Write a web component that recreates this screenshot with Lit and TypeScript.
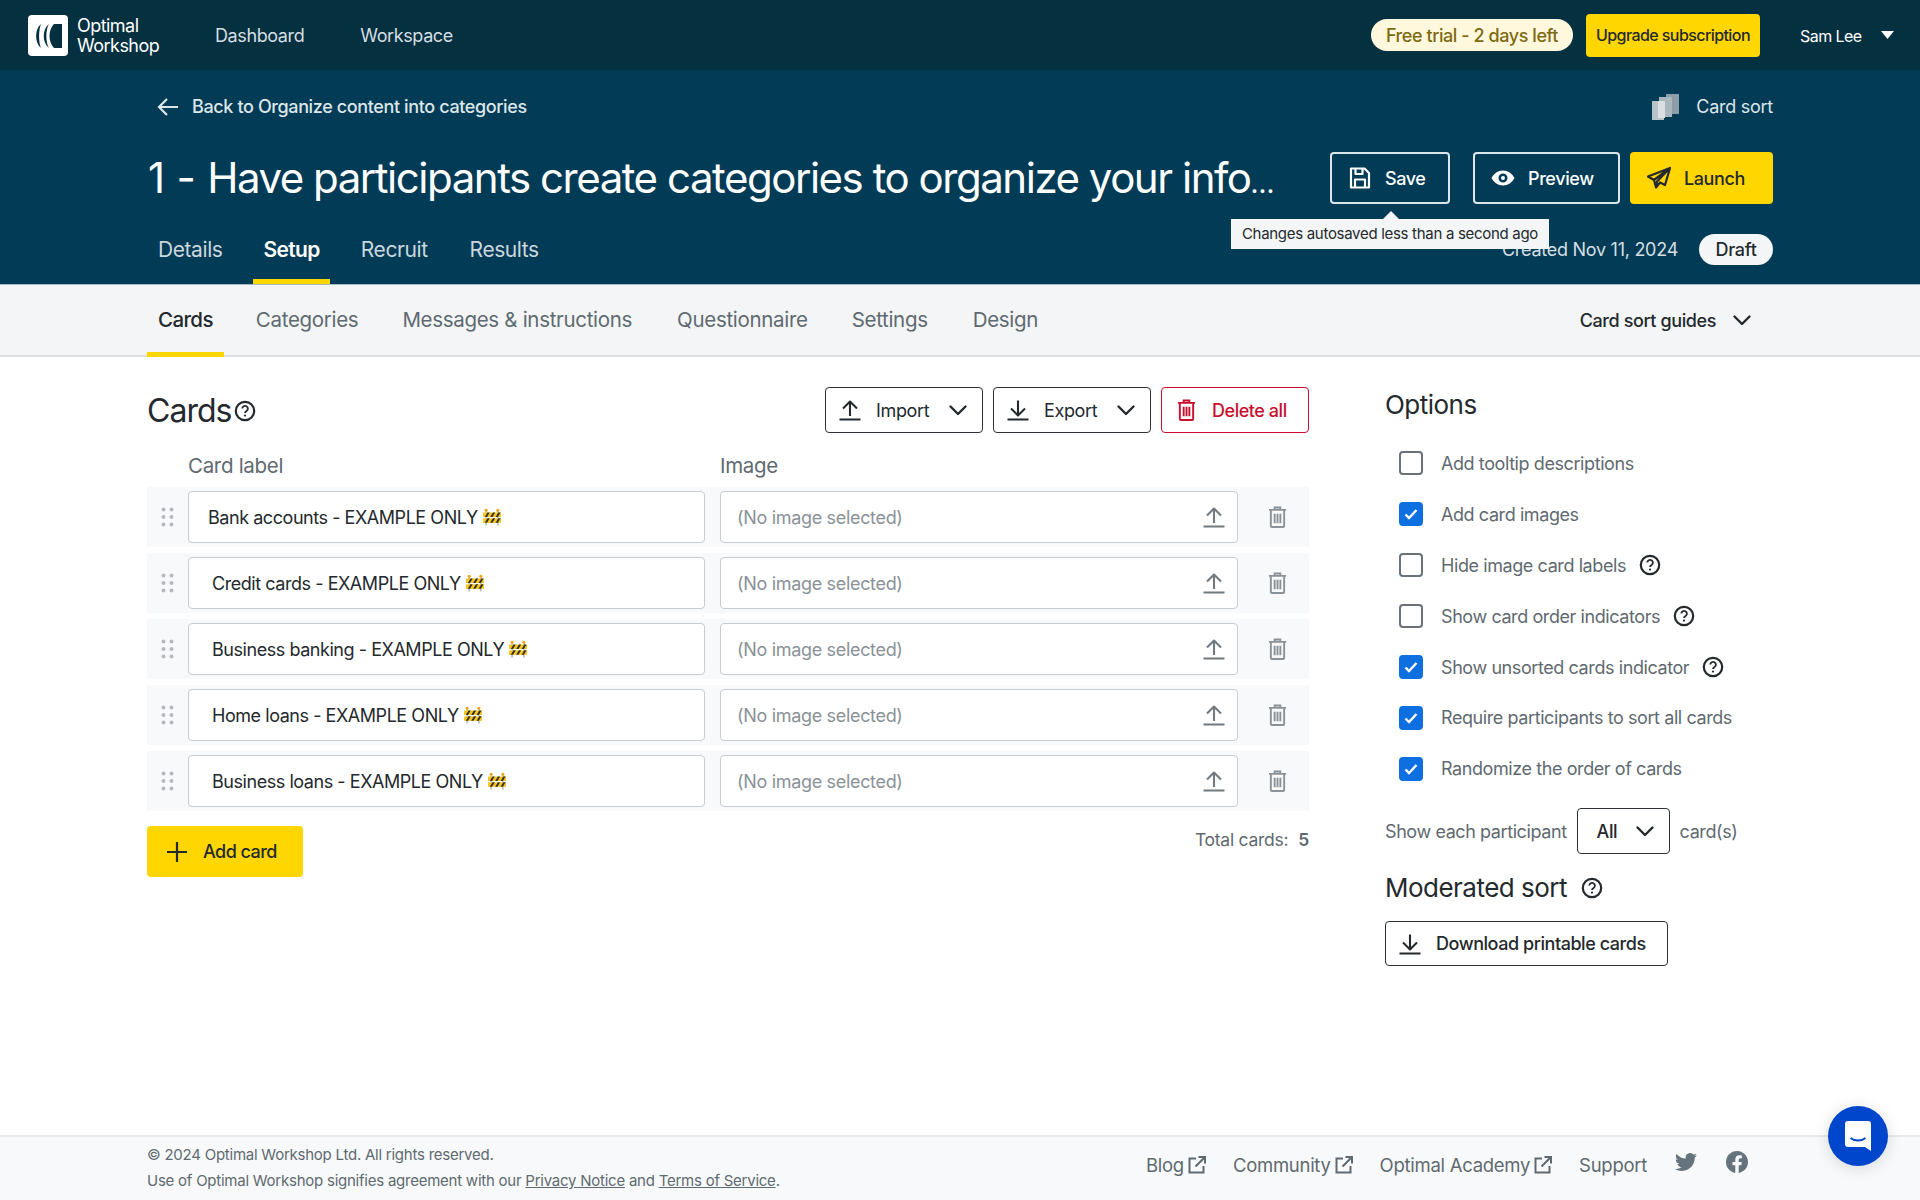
import { LitElement, html, css, svg } from "lit";
import { customElement } from "lit/decorators.js";

const chevron = svg`<path d="M2.500 6.500l7.500 7.500 7.500-7.500" fill="none" stroke="currentColor" stroke-width="2.400" stroke-linecap="round" stroke-linejoin="round"/>`;
const chev = html`<svg class="chev" viewBox="0 0 20 20">${chevron}</svg>`;
const upload = html`<svg class="ic" viewBox="0 0 24 24"><path d="M12 18V3.500M5 10.500L12 3.500l7 7M1.500 21.500h21" fill="none" stroke="currentColor" stroke-width="2.100" stroke-linejoin="round"/></svg>`;
const download = html`<svg class="ic" viewBox="0 0 24 24"><path d="M12 2.500v15M5 10.500l7 7 7-7M1.500 21.500h21" fill="none" stroke="currentColor" stroke-width="2.100" stroke-linejoin="round"/></svg>`;
const trash = html`<svg class="trash" viewBox="0 0 20 24"><path d="M1 4.500h18M7 4.500V2h6v2.500M3 4.500h14v17a1 1 0 0 1-1 1H4a1 1 0 0 1-1-1zM7 8.500v10M10 8.500v10M13 8.500v10" fill="none" stroke="currentColor" stroke-width="2"/></svg>`;
const help = html`<svg class="help" viewBox="0 0 22 22"><circle cx="11" cy="11" r="9.200" fill="none" stroke="currentColor" stroke-width="2.200"/><path d="M8.300 8.600a2.800 2.800 0 1 1 4.300 2.400c-1 .6-1.600 1-1.600 2" fill="none" stroke="currentColor" stroke-width="1.800"/><circle cx="11" cy="15.600" r="1.100" fill="currentColor"/></svg>`;
const ext = html`<svg class="ext" viewBox="0 0 20 20"><path d="M9 3.500H2.500v14h14V11M8.500 11.500L17.500 2.500M11.500 2h6.500v6.500" fill="none" stroke="currentColor" stroke-width="2"/></svg>`;
const barrier = html`<svg class="barrier" viewBox="0 0 20 20"><rect x="2.500" y="1.500" width="2" height="18" fill="#bcc3c9"/><rect x="15.500" y="1.500" width="2" height="18" fill="#bcc3c9"/><circle cx="3.500" cy="2.500" r="1.700" fill="#f4a51c"/><circle cx="16.500" cy="2.500" r="1.700" fill="#f4a51c"/><rect x="0" y="5" width="20" height="5" fill="#f7c51e"/><rect x="0" y="11.500" width="20" height="5" fill="#f7c51e"/><path d="M2 10l3-5h2.500l-3 5zM8 10l3-5h2.500l-3 5zM14 10l3-5h2.500l-3 5zM2 16.500l3-5h2.500l-3 5zM8 16.500l3-5h2.500l-3 5zM14 16.500l3-5h2.500l-3 5z" fill="#33302a"/></svg>`;

const rows = [
  ["Bank accounts - EXAMPLE ONLY", true],
  ["Credit cards - EXAMPLE ONLY", false],
  ["Business banking - EXAMPLE ONLY", false],
  ["Home loans - EXAMPLE ONLY", false],
  ["Business loans - EXAMPLE ONLY", false],
] as const;

const options: [string, boolean, boolean][] = [
  ["Add tooltip descriptions", false, false],
  ["Add card images", true, false],
  ["Hide image card labels", false, true],
  ["Show card order indicators", false, true],
  ["Show unsorted cards indicator", true, true],
  ["Require participants to sort all cards", true, false],
  ["Randomize the order of cards", true, false],
];

@customElement("app-root")
export class AppRoot extends LitElement {
  static styles = css`
    :host { display: flex; flex-direction: column; min-height: 1200px; position: relative; font-family: Inter, "Liberation Sans", sans-serif; color: #24292d; letter-spacing: -0.025em; background: #fff; overflow: hidden; }
    * { box-sizing: border-box; }
    a { color: inherit; }
    .ic { width: 24px; height: 24px; flex: none; }
    .chev { width: 20px; height: 20px; flex: none; }
    .trash { width: 19px; height: 24px; flex: none; }
    .help { width: 22px; height: 22px; flex: none; color: #24292d; }
    .ext { width: 20px; height: 20px; flex: none; margin-left: 3px; }
    .barrier { width: 18px; height: 18px; flex: none; margin-left: 5px; }

    .topnav { height: 70px; background: #04303f; display: flex; align-items: center; padding: 0 26px 0 28px; color: #fff; }
    .logo { width: 40px; height: 41px; flex: none; }
    .brand { margin-left: 9px; font-size: 18px; line-height: 20px; width: 100px; margin-right: 38px; letter-spacing: -0.03em; font-weight: 400; padding-top: 2px; }
    .nav { font-size: 18px; color: #d5dee3; margin-right: 56px; letter-spacing: -0.022em; }
    .spacer { flex: 1; }
    .trial { height: 32px; border-radius: 16px; background: #fff8dd; color: #7d6a10; font-size: 18px; font-weight: 500; display: flex; align-items: center; padding: 0 15px; margin-right: 13px; white-space: nowrap; letter-spacing: -0.024em; }
    .upgrade { height: 43px; width: 174px; background: #ffd600; border-radius: 4px; color: #24292d; font-size: 16px; font-weight: 500; display: flex; align-items: center; justify-content: center; margin-right: 40px; white-space: nowrap; letter-spacing: -0.036em; }
    .user { font-size: 16px; color: #fff; width: 81px; letter-spacing: -0.035em; padding-top: 2px; }
    .caret { width: 13px; height: 8px; flex: none; }

    .head { height: 215px; background: #023b56; color: #fff; padding: 0 147px; display: flex; flex-direction: column; border-bottom: 1px solid #a9b9c2; }
    .backrow { height: 75px; padding-bottom: 2px; display: flex; align-items: center; }
    .back { display: flex; align-items: center; font-size: 18px; color: #dde6ea; font-weight: 500; padding-left: 10px; gap: 13px; letter-spacing: -0.021em; }
    .back svg { width: 22px; height: 20px; }
    .type { margin-left: auto; display: flex; align-items: center; gap: 17px; font-size: 18px; color: #dde6ea; letter-spacing: -0.015em; }
    .type svg { width: 27px; height: 26px; }
    .titlerow { display: flex; align-items: center; height: 66px; }
    h1 { margin: 0; font-size: 42px; line-height: 50px; font-weight: 400; width: 1183px; white-space: nowrap; letter-spacing: -0.035em; padding-left: 1px; color: #fff; }
    .pre { word-spacing: 2.500px; }
    .ell { font-size: 0.66em; line-height: 0; }
    .hbtn { height: 52px; border-radius: 4px; border: 2px solid #dde6ea; font-size: 18px; font-weight: 500; display: flex; align-items: center; gap: 13px; color: #fff; padding-left: 16px; }
    .hbtn svg { width: 24px; height: 24px; }
    .save { width: 120px; margin-right: 23px; }
    .preview { width: 147px; margin-right: 10px; }
    .launch { width: 143px; background: #ffd600; border-color: #ffd600; color: #24292d; padding-left: 15px; }
    .tabrow { display: flex; align-items: stretch; flex: 1; margin-top: 9px; position: relative; padding-left: 1px; }
    .tab { font-size: 21px; color: #cbd7dd; padding: 0 10px; display: flex; align-items: center; border-bottom: 5px solid transparent; margin-right: 21px; letter-spacing: -0.02em; }
    .tab.on { color: #fff; font-weight: 600; border-color: #ffd600; margin-right: 21px; letter-spacing: -0.03em; }
    .tab.wide { margin-right: 22px; }
    .created { margin-left: auto; display: flex; align-items: center; font-size: 18px; color: #d5dfe5; gap: 21px; padding-bottom: 6px; letter-spacing: -0.015em; }
    .draft { width: 74px; height: 31px; border-radius: 16px; background: #f3f5f7; color: #24292d; font-weight: 500; display: flex; align-items: center; justify-content: center; }
    .tooltip { position: absolute; left: 1084px; top: -1px; width: 318px; height: 30px; padding-bottom: 1px; background: #f3f5f7; color: #24292d; font-size: 15px; display: flex; align-items: center; justify-content: center; white-space: nowrap; letter-spacing: -0.02em; }
    .tooltip::before { content: ""; position: absolute; left: 152px; top: -8px; border: 8px solid transparent; border-top: 0; border-bottom-color: #f3f5f7; }

    .subtabs { height: 72px; background: #f3f5f7; border-bottom: 2px solid #dcdfe2; display: flex; padding: 0 147px; align-items: stretch; color: #5f6a70; }
    .st { font-size: 20.500px; display: flex; align-items: center; padding: 2px 11px 0; margin-bottom: -2px; border-bottom: 5px solid transparent; letter-spacing: -0.015em; }
    .st.on { color: #24292d; font-weight: 500; border-color: #ffd600; letter-spacing: -0.03em; }
    .st.m21 { margin-left: 21px; }
    .st.m22 { margin-left: 22px; }
    .st.m23 { margin-left: 23px; }
    .guides { margin-left: auto; display: flex; align-items: center; gap: 16px; font-size: 18px; font-weight: 500; color: #24292d; padding-right: 21px; }

    main { flex: 1; display: flex; padding: 0 147px; }
    .left { width: 1162px; }
    .cardhead { display: flex; align-items: center; height: 46px; margin-top: 30px; }
    h2 { margin: 0; font-size: 32px; font-weight: 400; letter-spacing: -0.03em; }
    .cardhead .help { margin-left: 2px; margin-top: 1px; }
    .acts { margin-left: auto; display: flex; gap: 10px; }
    .btn { height: 46px; border: 1.500px solid #2d3236; border-radius: 4px; display: flex; align-items: center; font-size: 18px; color: #24292d; background: #fff; letter-spacing: -0.02em; }
    .btn.dd { width: 158px; padding: 0 14px 0 12px; }
    .btn.dd span { margin-left: 14px; margin-right: auto; }
    .btn.del { width: 148px; padding: 0 0 0 15px; color: #c8102e; border-color: #c8102e; font-weight: 500; gap: 16px; letter-spacing: -0.025em; }
    .cols { display: flex; padding-left: 41px; font-size: 20.500px; color: #5f6a70; margin-top: 11px; height: 43px; align-items: center; letter-spacing: -0.015em; }
    .cols div:first-child { width: 532px; }
    .list { display: flex; flex-direction: column; gap: 6px; }
    .row { height: 60px; background: #f8f9fa; display: flex; align-items: center; }
    .drag { width: 41px; display: flex; justify-content: center; }
    .drag svg { width: 13px; height: 20px; }
    .field { height: 52px; width: 517px; background: #fff; border: 1.500px solid #c8cdd1; border-radius: 4px; display: flex; align-items: center; font-size: 18px; padding-left: 23px; letter-spacing: -0.025em; }
    .field.first { padding-left: 19px; }
    .field.img { width: 518px; margin-left: 15px; color: #8a9297; justify-content: space-between; padding: 0 11px 0 16px; letter-spacing: -0.018em; }
    .field.img .ic { color: #70797f; }
    .del2 { margin-left: 30px; color: #8a9297; display: flex; }
    .foot { display: flex; align-items: flex-start; margin-top: 15px; }
    .add { width: 156px; height: 51px; background: #ffd600; border-radius: 4px; display: flex; align-items: center; font-size: 18px; font-weight: 500; padding-left: 19px; gap: 15px; letter-spacing: -0.03em; }
    .add svg { width: 22px; height: 22px; }
    .total { margin-left: auto; font-size: 17.500px; color: #5f6a70; margin-top: 4px; line-height: 20px; letter-spacing: -0.015em; }
    .total b { margin-left: 10px; font-weight: 600; }

    .right { margin-left: 76px; width: 388px; padding-top: 31px; }
    h3 { margin: 0; font-size: 26px; line-height: 34px; font-weight: 400; letter-spacing: -0.02em; }
    .opts { margin-top: 16px; margin-bottom: 14px; }
    .opt { height: 50.900px; display: flex; align-items: center; padding-left: 14px; font-size: 18px; color: #5f6a70; letter-spacing: -0.023em; }
    .box { width: 24px; height: 24px; border: 2.500px solid #687278; border-radius: 4px; margin-right: 18px; flex: none; display: flex; align-items: center; justify-content: center; }
    .box.on { background: #0e6fe0; border-color: #0e6fe0; }
    .box svg { width: 16px; height: 16px; }
    .opt .help { margin-left: 13px; }
    .each { display: flex; align-items: center; font-size: 18px; color: #5f6a70; height: 46px; letter-spacing: -0.023em; white-space: pre; }
    .sel { width: 93px; height: 46px; border: 1.500px solid #2d3236; border-radius: 4px; margin: 0 10px 0 10px; display: flex; align-items: center; justify-content: space-between; padding: 0 14px 0 19px; color: #24292d; font-weight: 500; }
    .mod { display: flex; align-items: center; margin-top: 17px; height: 34px; gap: 14px; }
    .dl { width: 283px; height: 45px; margin-top: 16px; padding-left: 12px; gap: 14px; font-weight: 500; letter-spacing: -0.025em; }

    footer { height: 65px; background: #f8f9fa; border-top: 2px solid #e8eaec; padding: 0 147px; display: flex; color: #5f6a70; font-size: 15px; flex: none; letter-spacing: -0.016em; }
    .legal { line-height: 26px; padding-top: 5px; white-space: nowrap; }
    .links { margin-left: auto; display: flex; align-items: center; font-size: 18.500px; height: 56px; margin-right: 25px; letter-spacing: -0.015em; }
    .lnk { display: flex; align-items: center; margin-right: 26px; }
    .lnk.sup { margin-right: 28px; }
    .soc { width: 22px; height: 22px; fill: #65747c; margin-top: -6px; }
    .soc.tw { margin-right: 29px; }
    .chat { position: absolute; left: 1828px; top: 1106px; width: 60px; height: 60px; border-radius: 50%; background: #0046cc; box-shadow: 0 2px 16px rgba(0,0,0,.14); display: flex; align-items: center; justify-content: center; }
    .chat svg { width: 28px; height: 32px; }
  `;

  render() {
    return html`
      <div class="topnav">
        <svg class="logo" viewBox="0 0 40 41"><rect width="40" height="41" rx="4" fill="#fff"/><path d="M13 9C6.500 14 6.500 28 13 33 10.500 28 10.500 14 13 9zM21 9C14 14 14 28 21 33 17.500 28 17.500 14 21 9zM34 9H26C20 15 20 27 26 33H34z" fill="#04303f"/></svg>
        <div class="brand">Optimal Workshop</div>
        <div class="nav">Dashboard</div>
        <div class="nav">Workspace</div>
        <div class="spacer"></div>
        <div class="trial">Free trial - 2 days left</div>
        <div class="upgrade">Upgrade subscription</div>
        <div class="user">Sam Lee</div>
        <svg class="caret" viewBox="0 0 13 8"><path d="M0 0h13L6.500 8z" fill="#fff"/></svg>
      </div>

      <div class="head">
        <div class="backrow">
          <div class="back">
            <svg viewBox="0 0 22 20"><path d="M21 10H2M10 2l-8 8 8 8" fill="none" stroke="currentColor" stroke-width="2.200"/></svg>
            Back to Organize content into categories
          </div>
          <div class="type">
            <svg viewBox="0 0 27 26"><rect x="14" y="0" width="13" height="20" fill="#8f9ea6"/><rect x="7" y="3" width="13" height="20" fill="#a9b6bc"/><rect x="0" y="7" width="12" height="19" fill="#b9c4c9"/><rect x="6" y="7" width="7" height="17" fill="#d9dfe2"/></svg>
            Card sort
          </div>
        </div>
        <div class="titlerow">
          <h1><span class="pre">1 - Have</span> participants create categories to organize your info<span class="ell">…</span></h1>
          <div class="hbtn save">
            <svg viewBox="0 0 24 24"><path d="M3 2.500h13.500l4.500 4.500v14.500H3zM7.500 2.500v5.500h7V2.500M7 21.500v-8h10v8" fill="none" stroke="currentColor" stroke-width="2.200" stroke-linejoin="round"/></svg>
            Save
          </div>
          <div class="hbtn preview">
            <svg viewBox="0 0 24 24"><path fill-rule="evenodd" d="M12 4.500c5 0 9.200 3.100 11.500 7.500-2.300 4.400-6.500 7.500-11.500 7.500S2.800 16.400.5 12C2.800 7.600 7 4.500 12 4.500zm0 3a4.500 4.500 0 1 0 0 9 4.500 4.500 0 0 0 0-9zm0 2.500a2 2 0 1 1 0 4 2 2 0 0 1 0-4z" fill="currentColor"/></svg>
            Preview
          </div>
          <div class="hbtn launch">
            <svg viewBox="0 0 24 24"><path d="M23 2L1 10.500l6 3.500 2 7.500 4-5 5 2.500zM7 14L23 2 10 15.500 9 21.500" fill="none" stroke="currentColor" stroke-width="2.200" stroke-linejoin="round"/></svg>
            Launch
          </div>
        </div>
        <div class="tabrow">
          <div class="tab">Details</div>
          <div class="tab on">Setup</div>
          <div class="tab wide">Recruit</div>
          <div class="tab">Results</div>
          <div class="created">Created Nov 11, 2024 <div class="draft">Draft</div></div>
          <div class="tooltip">Changes autosaved less than a second ago</div>
        </div>
      </div>

      <div class="subtabs">
        <div class="st on">Cards</div>
        <div class="st m21">Categories</div>
        <div class="st m22">Messages &amp; instructions</div>
        <div class="st m23">Questionnaire</div>
        <div class="st m22">Settings</div>
        <div class="st m23">Design</div>
        <div class="guides">Card sort guides ${chev}</div>
      </div>

      <main>
        <div class="left">
          <div class="cardhead">
            <h2>Cards</h2>${help}
            <div class="acts">
              <div class="btn dd">${upload}<span>Import</span>${chev}</div>
              <div class="btn dd">${download}<span>Export</span>${chev}</div>
              <div class="btn del">${trash}Delete all</div>
            </div>
          </div>
          <div class="cols"><div>Card label</div><div>Image</div></div>
          <div class="list">
            ${rows.map(([t, first]) => html`
              <div class="row">
                <div class="drag"><svg viewBox="0 0 13 20"><g fill="#b4babf"><circle cx="2.500" cy="2.500" r="2"/><circle cx="10.500" cy="2.500" r="2"/><circle cx="2.500" cy="10" r="2"/><circle cx="10.500" cy="10" r="2"/><circle cx="2.500" cy="17.500" r="2"/><circle cx="10.500" cy="17.500" r="2"/></g></svg></div>
                <div class="field ${first ? "first" : ""}">${t}${barrier}</div>
                <div class="field img">(No image selected)${upload}</div>
                <div class="del2">${trash}</div>
              </div>`)}
          </div>
          <div class="foot">
            <div class="add"><svg viewBox="0 0 22 22"><path d="M11 1v20M1 11h20" stroke="currentColor" stroke-width="2.200"/></svg>Add card</div>
            <div class="total">Total cards:<b>5</b></div>
          </div>
        </div>

        <div class="right">
          <h3>Options</h3>
          <div class="opts">
            ${options.map(([t, on, h]) => html`
              <div class="opt">
                <div class="box ${on ? "on" : ""}">${on ? html`<svg viewBox="0 0 16 16"><path d="M2.500 8.500l3.500 3.500 7.500-8" fill="none" stroke="#fff" stroke-width="2.400"/></svg>` : ""}</div>
                ${t}${h ? help : ""}
              </div>`)}
          </div>
          <div class="each">Show each participant<div class="sel">All ${chev}</div>card(s)</div>
          <div class="mod"><h3>Moderated sort</h3>${help}</div>
          <div class="btn dl">${download}Download printable cards</div>
        </div>
      </main>

      <footer>
        <div class="legal">© 2024 Optimal Workshop Ltd. All rights reserved.<br>Use of Optimal Workshop signifies agreement with our <a href="#">Privacy Notice</a> and <a href="#">Terms of Service</a>.</div>
        <div class="links">
          <div class="lnk">Blog${ext}</div>
          <div class="lnk">Community${ext}</div>
          <div class="lnk">Optimal Academy${ext}</div>
          <div class="lnk sup">Support</div>
          <svg class="soc tw" viewBox="0 0 24 24"><path d="M23.953 4.570a10 10 0 01-2.825.775 4.958 4.958 0 002.163-2.723c-.951.555-2.005.959-3.127 1.184a4.920 4.920 0 00-8.384 4.482C7.690 8.095 4.067 6.130 1.640 3.162a4.822 4.822 0 00-.666 2.475c0 1.710.870 3.213 2.188 4.096a4.904 4.904 0 01-2.228-.616v.060a4.923 4.923 0 003.946 4.827 4.996 4.996 0 01-2.212.085 4.936 4.936 0 004.604 3.417 9.867 9.867 0 01-6.102 2.105c-.390 0-.779-.023-1.170-.067a13.995 13.995 0 007.557 2.209c9.053 0 13.998-7.496 13.998-13.985 0-.210 0-.420-.015-.630A9.935 9.935 0 0024 4.590z"/></svg>
          <svg class="soc" viewBox="0 0 24 24"><path d="M24 12.073c0-6.627-5.373-12-12-12s-12 5.373-12 12c0 5.990 4.388 10.954 10.125 11.854v-8.385H7.078v-3.470h3.047V9.430c0-3.007 1.792-4.669 4.533-4.669 1.312 0 2.686.235 2.686.235v2.953H15.830c-1.491 0-1.956.925-1.956 1.874v2.250h3.328l-.532 3.470h-2.796v8.385C19.612 23.027 24 18.062 24 12.073z"/></svg>
        </div>
      </footer>

      <div class="chat"><svg viewBox="0 0 28 32"><path d="M4 1h20a3 3 0 0 1 3 3v27l-6-4H4a3 3 0 0 1-3-3V4a3 3 0 0 1 3-3z" fill="#fff"/><path d="M6.500 18c4 3.300 11 3.300 15 0" fill="none" stroke="#0046cc" stroke-width="2"/></svg></div>
    `;
  }
}
